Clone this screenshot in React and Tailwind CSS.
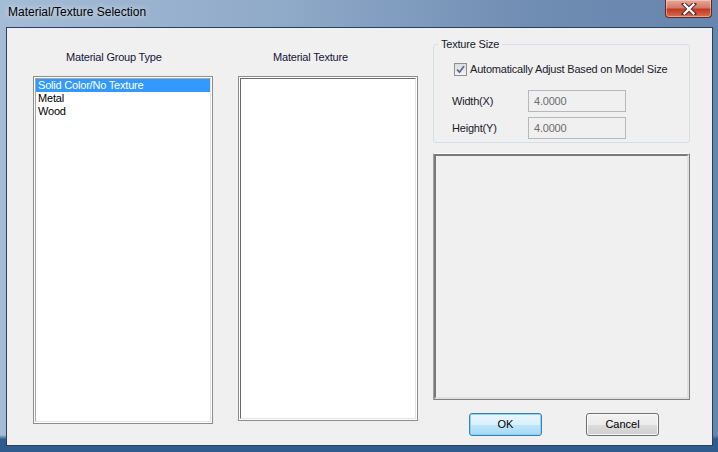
import React from "react";

const font = { fontFamily: '"Liberation Sans", Arial, sans-serif' };

function CloseButton() {
  return (
    <div className="mt-0 mr-[6px] flex h-[18px] w-[47px] items-center justify-center rounded-b-[4px] border border-t-0 border-[#5c2a22] bg-[linear-gradient(to_bottom,#e8a89c_0%,#d47a6a_45%,#c2391f_55%,#d96e56_100%)] shadow-[inset_0_0_0_1px_rgba(255,220,210,0.5)]">
      <svg width="16" height="12" viewBox="0 0 16 12">
        <path d="M3 1 L13 11 M13 1 L3 11" stroke="#4a2a26" strokeWidth="4.2" strokeLinecap="square" />
        <path d="M3.5 1.5 L12.5 10.5 M12.5 1.5 L3.5 10.5" stroke="#ffffff" strokeWidth="2.3" strokeLinecap="square" />
      </svg>
    </div>
  );
}

function ListBox({ items, selected, height }) {
  return (
    <div className="border border-[#8c8c8c] bg-white p-px" style={{ height }}>
      <div className="h-full border border-t-[#a5a5a5] border-l-[#a5a5a5] border-r-[#e3e3e3] border-b-[#e3e3e3] bg-white">
        {items.map((it, i) => (
          <div
            key={it}
            className={
              "h-[13px] pl-[2px] text-[11px] leading-[13px] tracking-[-0.2px] " +
              (i === selected ? "bg-[#3399ff] text-white" : "text-black")
            }
          >
            {it}
          </div>
        ))}
      </div>
    </div>
  );
}

function Field({ label }) {
  return (
    <div className="flex h-[22px] items-center">
      <div className="w-[94px] pl-[18px] text-[11px] tracking-[-0.2px] text-[#1a1a2a]">{label}</div>
      <div className="flex h-[22px] w-[98px] items-center border border-[#b5b9bd] bg-[#f0f0f0] pl-[5px] text-[11px] tracking-[-0.2px] text-[#6d6d6d]">
        4.0000
      </div>
    </div>
  );
}

export default function App() {
  return (
    <div
      className="flex h-[452px] w-[718px] flex-col overflow-hidden bg-[linear-gradient(to_right,#a4bcd6_0%,#8fa9c8_40%,#6f8cb2_75%,#6786ad_100%)]"
      style={font}
    >
      {/* Title bar */}
      <div className="flex h-[27px] shrink-0 items-start justify-between">
        <div className="pl-[8px] pt-[4px] text-[12px] leading-[16px] text-black [text-shadow:0_0_6px_rgba(255,255,255,0.9)]">
          Material/Texture Selection
        </div>
        <CloseButton />
      </div>

      {/* Client */}
      <div className="flex flex-1 pl-[6px] pr-[5px] pb-[6px] bg-[linear-gradient(to_bottom,transparent_0%,transparent_96%,#2f5b8e_97%)]">
        <div className="flex h-[419px] w-[707px] border border-[#2a3f5c] bg-[#f0f0f0]">
          {/* Left column */}
          <div className="ml-[26px] flex w-[180px] flex-col pt-[22px]">
            <div className="h-[14px] pl-[33px] text-[11px] leading-[14px] tracking-[-0.2px] text-[#14143a]">Material Group Type</div>
            <div className="mt-[12px]">
              <ListBox items={["Solid Color/No Texture", "Metal", "Wood"]} selected={0} height={348} />
            </div>
          </div>

          {/* Middle column */}
          <div className="ml-[25px] flex w-[180px] flex-col pt-[22px]">
            <div className="h-[14px] pl-[35px] text-[11px] leading-[14px] tracking-[-0.2px] text-[#14143a]">Material Texture</div>
            <div className="mt-[12px] h-[345px] border border-[#8c8c8c] bg-white p-px">
              <div className="h-full border border-t-[#6d6d6d] border-l-[#6d6d6d] border-r-[#e3e3e3] border-b-[#e3e3e3] bg-white" />
            </div>
          </div>

          {/* Right column */}
          <div className="ml-[15px] flex w-[257px] flex-col pt-[16px]">
            <div className="relative h-[99px] rounded-[3px] border border-[#d5dfe5]">
              <div className="absolute -top-[8px] left-[4px] bg-[#f0f0f0] px-[3px] text-[11px] leading-[14px] tracking-[-0.2px] text-[#1a1a2a]">
                Texture Size
              </div>
              <div className="flex flex-col pt-[17px]">
                <div className="flex items-center pl-[20px]">
                  <div className="flex h-[13px] w-[13px] items-center justify-center border border-[#8f8f8f] bg-[linear-gradient(to_bottom,#dcdcdc,#f4f4f4)]">
                    <svg width="9" height="9" viewBox="0 0 9 9">
                      <path d="M1 4.5 L3.5 7.2 L8 1.2" stroke="#5a6a95" strokeWidth="1.8" fill="none" />
                    </svg>
                  </div>
                  <div className="ml-[3px] text-[11px] leading-[14px] tracking-[-0.2px] text-[#1a1a2a]">Automatically Adjust Based on Model Size</div>
                </div>
                <div className="mt-[14px] flex flex-col gap-[5px]">
                  <Field label="Width(X)" />
                  <Field label="Height(Y)" />
                </div>
              </div>
            </div>

            <div className="mt-[10px] h-[247px] border border-t-white border-l-[#a0a0a0] border-r-[#808080] border-b-[#808080]">
              <div className="h-full border-2 border-t-[#7a7a7a] border-l-[#7a7a7a] border-r-[#e0e0e0] border-b-[#e0e0e0] bg-[#f0f0f0]" />
            </div>

            <div className="mt-[13px] flex pl-[36px]">
              <div className="flex h-[23px] w-[73px] items-center justify-center rounded-[3px] border border-[#3c7fb1] bg-[linear-gradient(to_bottom,#eaf6fd_0%,#d9f0fc_50%,#bee6fd_51%,#a7d9f5_100%)] text-[11px] text-black shadow-[inset_0_0_0_1px_rgba(130,210,250,0.9)]">
                OK
              </div>
              <div className="ml-[44px] flex h-[23px] w-[73px] items-center justify-center rounded-[3px] border border-[#707070] bg-[linear-gradient(to_bottom,#f2f2f2_0%,#ebebeb_50%,#dddddd_51%,#cfcfcf_100%)] text-[11px] text-black shadow-[inset_0_0_0_1px_rgba(255,255,255,0.8)]">
                Cancel
              </div>
            </div>
          </div>
        </div>
      </div>
    </div>
  );
}
